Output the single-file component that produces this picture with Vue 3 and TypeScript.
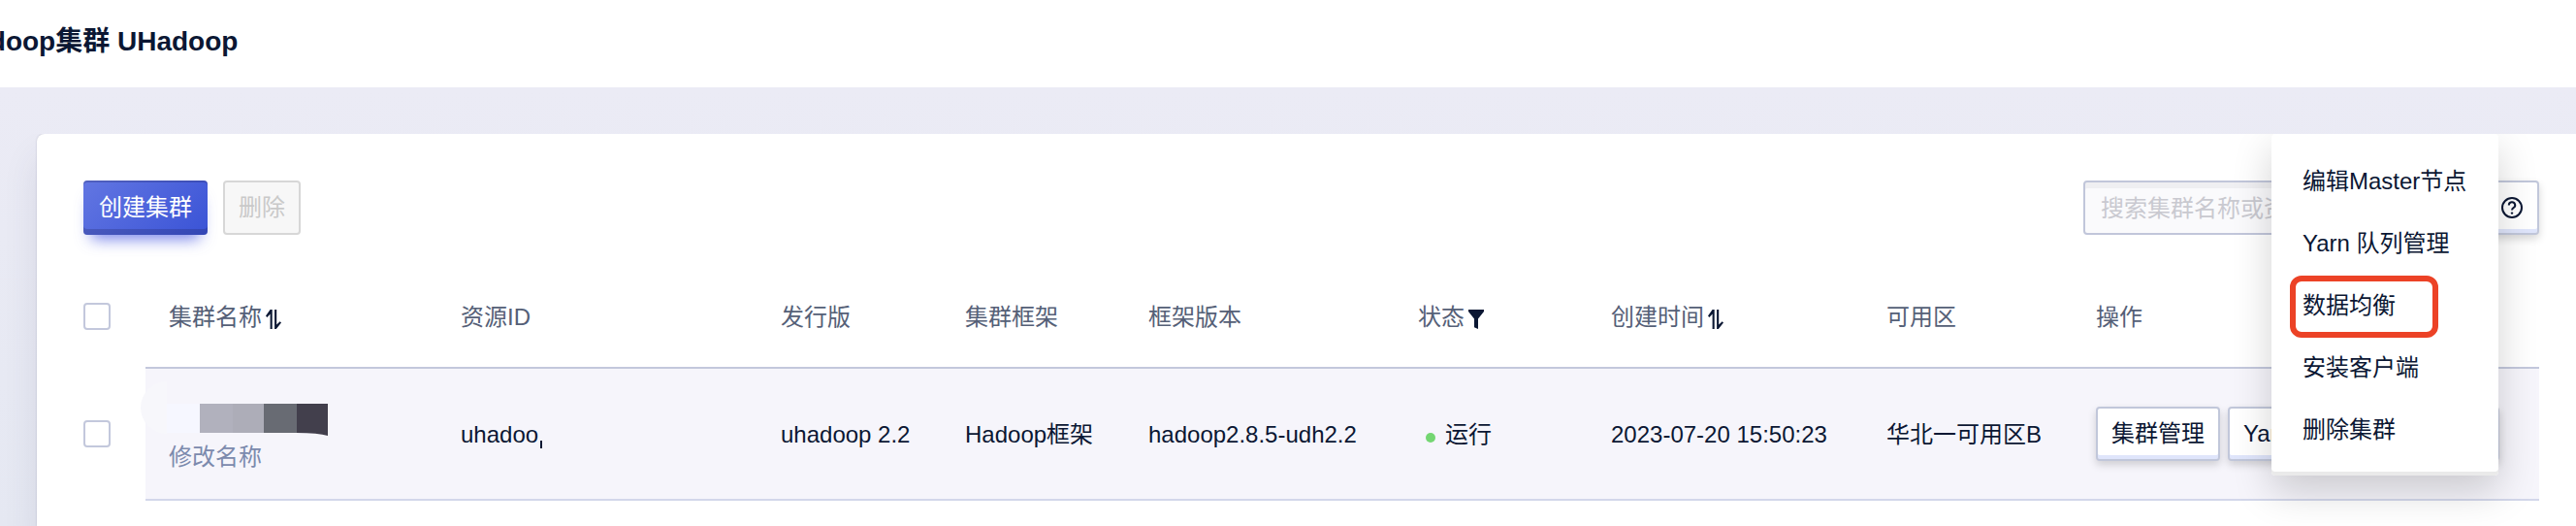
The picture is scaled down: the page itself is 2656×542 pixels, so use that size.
<script setup lang="ts">
import { ref } from 'vue'

interface Cluster {
  id: string
  release: string
  framework: string
  version: string
  status: string
  created: string
  zone: string
}

interface Column {
  key: string
  label: string
  icon?: 'sort' | 'filter'
}

const columns: Column[] = [
  { key: 'name', label: '集群名称', icon: 'sort' },
  { key: 'id', label: '资源ID' },
  { key: 'release', label: '发行版' },
  { key: 'framework', label: '集群框架' },
  { key: 'version', label: '框架版本' },
  { key: 'status', label: '状态', icon: 'filter' },
  { key: 'created', label: '创建时间', icon: 'sort' },
  { key: 'zone', label: '可用区' },
  { key: 'actions', label: '操作' },
]

const clusters: Cluster[] = [
  {
    id: 'uhadoo',
    release: 'uhadoop 2.2',
    framework: 'Hadoop框架',
    version: 'hadoop2.8.5-udh2.2',
    status: '运行',
    created: '2023-07-20 15:50:23',
    zone: '华北一可用区B',
  },
]

const menuItems = ['编辑Master节点', 'Yarn 队列管理', '数据均衡', '安装客户端', '删除集群']
const highlighted = '数据均衡'
const keyword = ref('')
</script>

<template>
  <div class="page">
    <header class="topbar">
      <h1 class="title">Hadoop集群 UHadoop</h1>
    </header>

    <main class="content">
      <section class="card">
        <div class="toolbar">
          <button type="button" class="btn btn-primary">创建集群</button>
          <button type="button" class="btn btn-disabled" disabled>删除</button>
          <div class="search">
            <input
              v-model="keyword"
              class="search-input"
              type="text"
              aria-label="搜索集群"
              placeholder="搜索集群名称或资源ID"
            />
            <button type="button" class="btn btn-icon" aria-label="帮助">
              <svg width="24" height="24" viewBox="0 0 24 24" fill="none" stroke="currentColor" stroke-width="2">
                <circle cx="12" cy="12" r="10" />
                <path d="M8.8 9.4a3.2 3.2 0 1 1 4.7 2.8c-1 .6-1.5 1-1.5 2.3" />
                <circle cx="12" cy="17.6" r="1.2" fill="currentColor" stroke="none" />
              </svg>
            </button>
          </div>
        </div>

        <table class="table">
          <colgroup>
            <col class="c-check" />
            <col v-for="c in columns" :key="c.key" :class="'c-' + c.key" />
          </colgroup>
          <thead>
            <tr>
              <th class="check"><input type="checkbox" class="box" aria-label="全选" /></th>
              <th v-for="c in columns" :key="c.key" scope="col">
                <span class="head">
                  {{ c.label }}
                  <svg
                    v-if="c.icon === 'sort'"
                    class="head-icon"
                    width="16"
                    height="20"
                    viewBox="0 0 16 20"
                    fill="currentColor"
                  >
                    <path d="M4.6 0H6.7V20H4.6V4.6L1.4 8L0 6.6Z" />
                    <path d="M9.1 0H11.2V15.6L14.7 12.2L16 13.6L10.8 20H9.1Z" />
                  </svg>
                  <svg
                    v-else-if="c.icon === 'filter'"
                    class="head-icon"
                    width="16"
                    height="20"
                    viewBox="0 0 16 20"
                    fill="currentColor"
                  >
                    <path d="M0 0H16V2L10 9.5V20L6 18.2V9.5L0 2Z" />
                  </svg>
                </span>
              </th>
            </tr>
          </thead>
          <tbody>
            <tr v-for="row in clusters" :key="row.id">
              <td class="check"><input type="checkbox" class="box" aria-label="选择集群" /></td>
              <td>
                <div class="name">
                  <svg class="mask" width="194" height="46" viewBox="0 0 194 46" aria-hidden="true">
                    <path d="M28-9A27 27 0 0 0 28 45Z" fill="#f7f7fb" />
                    <rect x="28" y="14" width="34" height="30" fill="#f6f7ff" />
                    <rect x="62" y="14" width="34" height="30" fill="#b1b1bd" />
                    <rect x="96" y="14" width="32" height="30" fill="#adadb8" />
                    <rect x="128" y="14" width="34" height="30" fill="#686b73" />
                    <path d="M162 14H194V47Q184 44 162 44Z" fill="#423f4c" />
                  </svg>
                  <a href="#" class="rename">修改名称</a>
                </div>
              </td>
              <td>{{ row.id }}<i class="stub"></i></td>
              <td>{{ row.release }}</td>
              <td>{{ row.framework }}</td>
              <td>{{ row.version }}</td>
              <td>
                <span class="status"><i class="dot"></i>{{ row.status }}</span>
              </td>
              <td>{{ row.created }}</td>
              <td>{{ row.zone }}</td>
              <td class="actions-cell">
                <div class="actions">
                  <button type="button" class="btn">集群管理</button>
                  <button type="button" class="btn">Yarn</button>
                  <button type="button" class="btn btn-more">更多</button>
                </div>
              </td>
            </tr>
          </tbody>
        </table>

        <ul class="menu">
          <li v-for="item in menuItems" :key="item" class="menu-row">
            <button type="button" class="menu-item" :class="{ marked: item === highlighted }">{{ item }}</button>
          </li>
        </ul>
      </section>
    </main>
  </div>
</template>

<style>
body {
  margin: 0;
}
</style>

<style scoped>
.page {
  display: flex;
  flex-direction: column;
  min-height: 100vh;
  overflow: hidden;
  background: linear-gradient(#ebebf5 90px, #e5e8f2);
  color: #0b1733;
  font-family: 'Liberation Sans', 'Noto Sans CJK SC', sans-serif;
  font-size: 24px;
  line-height: 36px;
}

.page *,
.page *::before {
  box-sizing: border-box;
}

.topbar {
  display: flex;
  align-items: center;
  height: 90px;
  padding-bottom: 4px;
  background: #fff;
}

.title {
  margin: 0 0 0 -47px;
  font-size: 28px;
  font-weight: 700;
  white-space: nowrap;
}

.content {
  display: flex;
  flex: 1;
  padding: 48px 0 0 38px;
}

.card {
  position: relative;
  flex: 1;
  min-width: 0;
  padding: 48px 38px 24px 48px;
  border-radius: 8px 0 0 0;
  background: #fff;
  box-shadow: 0 0 2px rgba(60, 60, 90, 0.25), 0 24px 36px rgba(60, 60, 90, 0.1);
  clip-path: inset(0 0 0 -38px);
}

.toolbar {
  display: flex;
  gap: 16px;
}

.search {
  display: flex;
  gap: 8px;
  width: 470px;
  margin-left: auto;
}

.search-input {
  flex: 1;
  min-width: 0;
  height: 56px;
  padding: 2px 16px 0;
  border: 2px solid #c1c6da;
  border-radius: 4px;
  background: #fafafc;
  box-shadow: inset 0 6px 0 #efeff2;
  color: #0b1733;
  font: inherit;
}

.search-input::placeholder {
  color: #c9c9d0;
  opacity: 1;
}

.btn {
  display: flex;
  align-items: center;
  justify-content: center;
  height: 56px;
  padding: 0 14px;
  border: 2px solid #c1c7da;
  border-radius: 4px;
  background: #fff;
  box-shadow: inset 0 -4px 0 #dfe5fb, 0 4px 8px rgba(0, 0, 0, 0.16);
  color: #0b1733;
  font: inherit;
  white-space: nowrap;
}

.btn-primary {
  padding: 0 16px;
  border: 0;
  background: linear-gradient(135deg, #6276e2, #3a53d6);
  box-shadow: inset 0 2px 0 rgba(30, 30, 80, 0.24), inset 0 -6px 0 rgba(30, 30, 80, 0.24),
    0 12px 16px -8px rgba(70, 85, 225, 0.75);
  color: #fff;
}

.btn-disabled {
  border-color: #d7d7d7;
  background: #f7f7f7;
  box-shadow: none;
  color: #c9c9c9;
}

.btn-icon {
  width: 56px;
  padding: 0;
}

.table {
  width: 100%;
  margin-top: 32px;
  border-spacing: 0;
  table-layout: fixed;
}

.c-check {
  width: 64px;
}
.c-name {
  width: 301px;
}
.c-id {
  width: 330px;
}
.c-release {
  width: 190px;
}
.c-framework {
  width: 189px;
}
.c-version {
  width: 278px;
}
.c-status {
  width: 199px;
}
.c-created {
  width: 284px;
}
.c-zone {
  width: 216px;
}
.c-actions {
  width: 481px;
}

th,
td {
  padding: 2px 0 0 24px;
  text-align: left;
  vertical-align: middle;
  white-space: nowrap;
}

th {
  height: 106px;
  border-bottom: 2px solid #c3c8dc;
  color: #556077;
  font-weight: 400;
}

td {
  height: 136px;
  border-bottom: 2px solid #d3d7ea;
  background: #f6f5fb;
}

.check {
  padding: 0;
  border-color: transparent;
  background: none;
}

.actions-cell {
  padding-top: 0;
}

.box {
  display: block;
  width: 28px;
  height: 28px;
  margin: 0;
  appearance: none;
  border: 2px solid #c3c8dc;
  border-radius: 4px;
  background: #fff;
}

.head {
  display: inline-flex;
  align-items: center;
  gap: 4px;
}

.head-icon {
  margin-top: 4px;
  color: #0b1733;
}

.name {
  display: flex;
  flex-direction: column;
  align-items: flex-start;
  line-height: 46px;
}

.mask {
  margin-left: -30px;
  overflow: visible;
}

.rename {
  color: #7c8aad;
  text-decoration: none;
}

.stub {
  display: inline-block;
  width: 2px;
  height: 8px;
  margin-left: 2px;
  background: #0b1733;
  vertical-align: -6px;
}

.status {
  display: inline-flex;
  align-items: center;
  gap: 10px;
  padding-left: 8px;
}

.dot {
  width: 10px;
  height: 10px;
  margin-top: 6px;
  border-radius: 50%;
  background: #74d672;
}

.actions {
  display: flex;
  gap: 8px;
  width: 416px;
}

.btn-more {
  margin-left: auto;
}

.menu {
  position: absolute;
  top: 0;
  right: 80px;
  width: 234px;
  margin: 0;
  padding: 16px 0;
  border-radius: 4px;
  background: #fff;
  box-shadow: inset 0 -4px 0 #eaeaea, 0 16px 40px rgba(0, 0, 0, 0.18);
  list-style: none;
}

.menu-row {
  height: 64px;
}

.menu-item {
  position: relative;
  display: block;
  width: 100%;
  height: 64px;
  padding: 2px 32px 0;
  border: 0;
  background: none;
  color: #0b1733;
  font: inherit;
  text-align: left;
  white-space: nowrap;
}

.marked::before {
  content: '';
  position: absolute;
  inset: 2px 62px -2px 19px;
  border: 6px solid #ec4226;
  border-radius: 12px;
}
</style>
